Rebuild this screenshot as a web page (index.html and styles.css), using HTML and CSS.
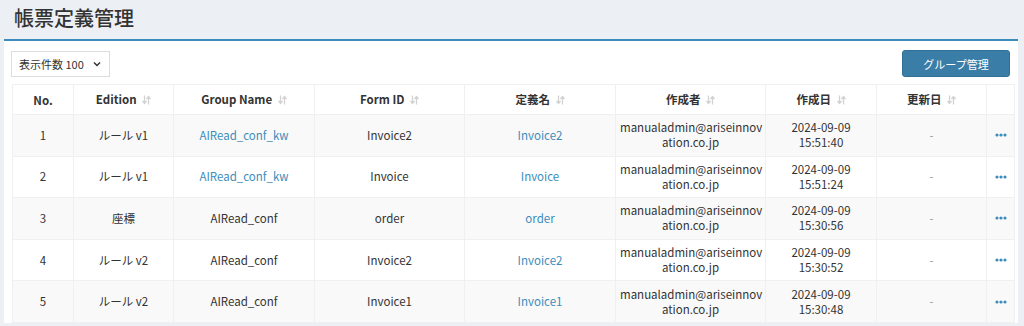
FILE: index.html
```html
<!DOCTYPE html>
<html>
  <head>
    <meta charset="utf-8">
    <link rel="stylesheet" href="styles.css">
  </head>
  <body>
    <div class="content-header">
      <h1>帳票定義管理</h1>
    </div>
    <div class="box">
      <div class="toolbar">
        <div class="page-size">
          <span>表示件数 100</span>
          <svg class="chevron" width="8" height="6" viewBox="0 0 8 6"><path d="M1 1.5 L4 4.5 L7 1.5" fill="none" stroke="#333" stroke-width="1.5"/></svg>
        </div>
        <button class="btn-primary">グループ管理</button>
      </div>
      <table class="form-table">
        <colgroup>
          <col style="width:61px"><col style="width:100px"><col style="width:141px"><col style="width:150px">
          <col style="width:151px"><col style="width:150px"><col style="width:111px"><col style="width:110px"><col style="width:28px">
        </colgroup>
        <thead>
          <tr>
            <th>No.</th>
            <th>Edition <span class="sort"></span></th>
            <th>Group Name <span class="sort"></span></th>
            <th>Form ID <span class="sort"></span></th>
            <th>定義名 <span class="sort"></span></th>
            <th>作成者 <span class="sort"></span></th>
            <th>作成日 <span class="sort"></span></th>
            <th>更新日 <span class="sort"></span></th>
            <th></th>
          </tr>
        </thead>
        <tbody id="rows"></tbody>
      </table>
    </div>
    <script>
      const forms = [
        { no: 1, edition: "ルール v1", group: "AIRead_conf_kw", groupLink: true, formId: "Invoice2", name: "Invoice2", date: "2024-09-09", time: "15:51:40" },
        { no: 2, edition: "ルール v1", group: "AIRead_conf_kw", groupLink: true, formId: "Invoice", name: "Invoice", date: "2024-09-09", time: "15:51:24" },
        { no: 3, edition: "座標", group: "AIRead_conf", groupLink: false, formId: "order", name: "order", date: "2024-09-09", time: "15:30:56" },
        { no: 4, edition: "ルール v2", group: "AIRead_conf", groupLink: false, formId: "Invoice2", name: "Invoice2", date: "2024-09-09", time: "15:30:52" },
        { no: 5, edition: "ルール v2", group: "AIRead_conf", groupLink: false, formId: "Invoice1", name: "Invoice1", date: "2024-09-09", time: "15:30:48" }
      ];
      const sortIcon = `<svg width="9" height="10" viewBox="0 0 9 10"><path d="M2.5 0.5 V8 M0.5 6 L2.5 8.5 L4.5 6 M6.5 9.5 V2 M4.5 4 L6.5 1.5 L8.5 4" fill="none" stroke="#d2d2d2" stroke-width="1.3"/></svg>`;
      document.querySelectorAll(".sort").forEach(s => s.innerHTML = sortIcon);

      let html = "";
      forms.forEach(f => {
        const group = f.groupLink ? `<a href="#">${f.group}</a>` : f.group;
        html += `<tr>
          <td>${f.no}</td>
          <td>${f.edition}</td>
          <td>${group}</td>
          <td>${f.formId}</td>
          <td><a href="#">${f.name}</a></td>
          <td class="email">manualadmin@ariseinnov<br>ation.co.jp</td>
          <td>${f.date}<br>${f.time}</td>
          <td class="muted">-</td>
          <td><svg class="dots" width="12" height="4" viewBox="0 0 12 4"><circle cx="2" cy="2" r="1.6"/><circle cx="6" cy="2" r="1.6"/><circle cx="10" cy="2" r="1.6"/></svg></td>
        </tr>`;
      });
      document.querySelector("#rows").innerHTML = html;
    </script>
  </body>
</html>
```

FILE: styles.css
```css
* {
  margin: 0;
  padding: 0;
  box-sizing: border-box;
}
body {
  background-color: #ecf0f5;
  font-family: "Noto Sans CJK JP", "Noto Sans", sans-serif;
  color: #333;
  font-size: 11.5px;
}
.content-header {
  height: 39px;
  padding: 4px 14px 0;
}
.content-header h1 {
  font-size: 20px;
  font-weight: 500;
  line-height: 28px;
  color: #333;
}
.box {
  margin: 0 6px 0 4px;
  background-color: white;
  border-top: 2px solid #3c8dbc;
  padding: 9px 4px 0 8px;
}
.toolbar {
  display: flex;
  justify-content: space-between;
  align-items: center;
  margin-bottom: 7px;
}
.page-size {
  width: 99px;
  height: 26px;
  margin-left: -1px;
  border: 1px solid #ddd;
  display: flex;
  align-items: center;
  justify-content: space-between;
  padding: 0 8px 0 7px;
  font-size: 11px;
}
.btn-primary {
  width: 108px;
  height: 27px;
  margin-right: 4px;
  background-color: #3a7ea8;
  color: white;
  border: 1px solid #316f96;
  border-radius: 3px;
  font-family: inherit;
  font-size: 11px;
}
.form-table {
  width: 1002px;
  border-collapse: collapse;
  table-layout: fixed;
  border: 1px solid #f4f4f4;
}
.form-table th,
.form-table td {
  border: 1px solid #f0f0f0;
  text-align: center;
  vertical-align: middle;
}
.form-table th {
  height: 30px;
  font-weight: bold;
  padding: 0 4px;
}
.form-table td {
  height: 41.6px;
  padding: 4px;
  line-height: 15px;
}
.form-table tbody tr:nth-child(odd) {
  background-color: #f9f9f9;
}
.sort {
  display: inline-block;
  margin-left: 3px;
  vertical-align: -1px;
}
.form-table a {
  color: #3c8dbc;
  text-decoration: none;
}
.email {
  white-space: nowrap;
}
.muted {
  color: #999;
}
.dots {
  fill: #3c8dbc;
  display: block;
  margin: 0 auto;
}
```
